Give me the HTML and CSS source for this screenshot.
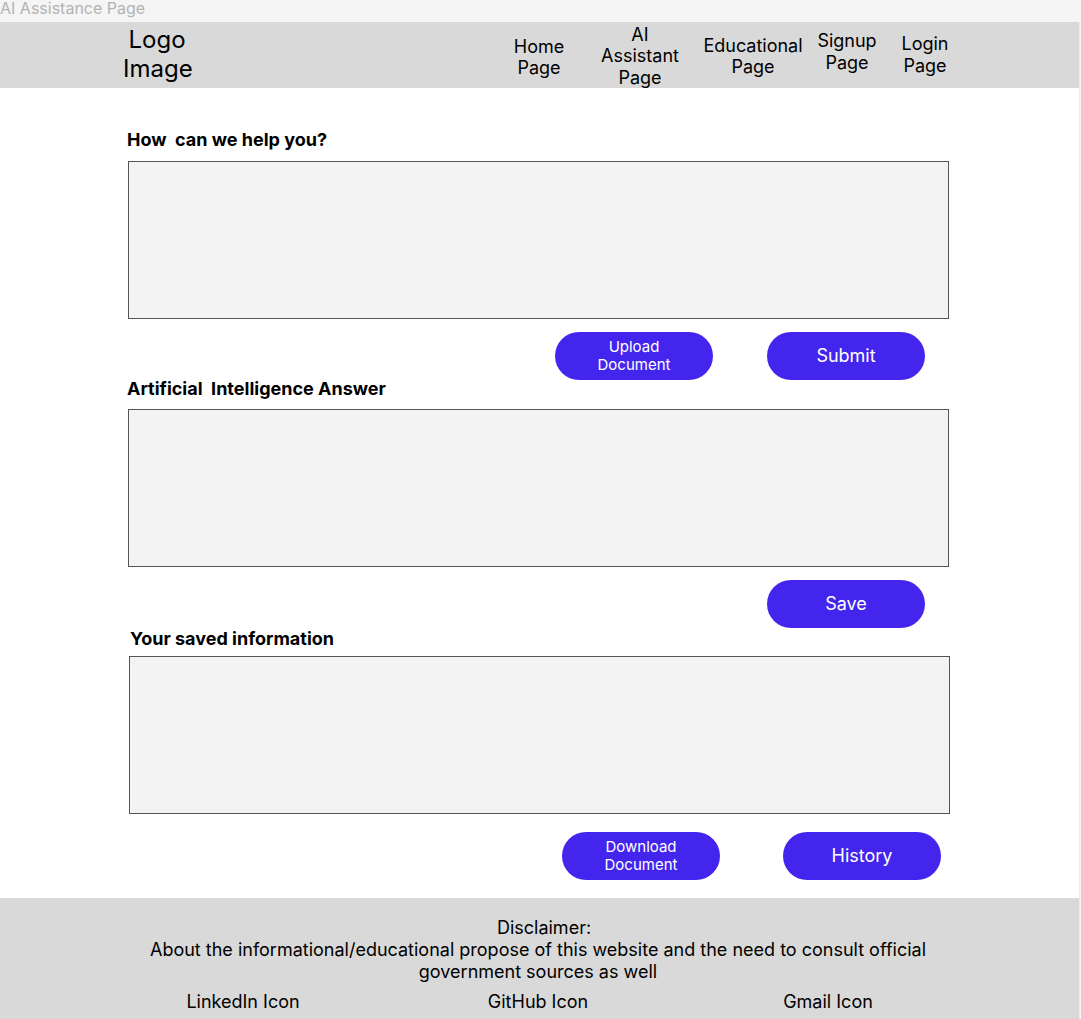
FILE: index.html
```html
<!DOCTYPE html>
<html lang="en">
<head>
<meta charset="utf-8">
<title>AI Assistance Page</title>
<link rel="stylesheet" href="styles.css">
</head>
<body>
<div class="frame-label">AI Assistance Page</div>
<div class="frame">
  <header class="header">
    <div class="logo">Logo<br>Image</div>
    <nav class="nav">
      <a class="nav-item nav-home">Home<br>Page</a>
      <a class="nav-item nav-ai">AI<br>Assistant<br>Page</a>
      <a class="nav-item nav-edu">Educational<br>Page</a>
      <a class="nav-item nav-signup">Signup<br>Page</a>
      <a class="nav-item nav-login">Login<br>Page</a>
    </nav>
  </header>

  <main class="main">
    <section class="block block-help">
      <h2 class="block-title">How&nbsp; can we help you?</h2>
      <div class="box"></div>
      <div class="actions actions-help">
        <button class="btn btn-small btn-upload">Upload<br>Document</button>
        <button class="btn btn-submit">Submit</button>
      </div>
    </section>

    <section class="block block-answer">
      <h2 class="block-title title-answer">Artificial&nbsp; Intelligence Answer</h2>
      <div class="box"></div>
      <div class="actions actions-answer">
        <button class="btn btn-save">Save</button>
      </div>
    </section>

    <section class="block block-saved">
      <h2 class="block-title title-saved">Your saved information</h2>
      <div class="box box-saved"></div>
      <div class="actions actions-saved">
        <button class="btn btn-small btn-download">Download<br>Document</button>
        <button class="btn btn-history">History</button>
      </div>
    </section>
  </main>

  <footer class="footer">
    <p class="disclaimer"><span class="disclaimer-head">Disclaimer:</span><br>About the informational/educational propose of this website and the need to consult official<br>government sources as well</p>
    <div class="socials">
      <span class="social social-linkedin">LinkedIn Icon</span>
      <span class="social social-github">GitHub Icon</span>
      <span class="social social-gmail">Gmail Icon</span>
    </div>
  </footer>
</div>
</body>
</html>
```
FILE: styles.css
```css
* { box-sizing: border-box; }
html, body { margin: 0; padding: 0; }
body {
  background: #f5f5f5;
  font-family: Inter, "Noto Sans", sans-serif;
  color: #000;
  width: 1081px;
  height: 1019px;
  overflow: hidden;
}
.frame-label {
  height: 22px;
  font-size: 16px;
  line-height: 16px;
  color: #b3b3b3;
}
.frame {
  width: 1080px;
  background: #fff;
  border-right: 1px solid #ececec;
}
.header {
  height: 66px;
  background: #d9d9d9;
  display: flex;
  align-items: center;
}
.logo {
  width: 68px;
  margin-left: 123px;
  text-align: center;
  font-size: 24px;
  line-height: 29px;
  padding-bottom: 2px;
}
.nav {
  display: flex;
  align-items: center;
  margin-left: 298px;
  height: 100%;
}
.nav-item {
  text-align: center;
  font-size: 18px;
  line-height: 21.5px;
  color: #000;
}
.nav-home { width: 100px; padding-top: 4px; }
.nav-ai { width: 102px; padding-top: 2px; }
.nav-edu { width: 124px; padding-top: 2px; }
.nav-signup { width: 64px; padding-bottom: 7px; }
.nav-login { width: 92px; padding-bottom: 1px; }

.main {
  height: 810px;
  padding-top: 41px;
}
.block { margin-left: 128px; width: 822px; }
.block-title {
  margin: 0 0 11px -1px;
  font-size: 18px;
  line-height: 21px;
  font-weight: 700;
}
.title-answer { margin-bottom: 10px; }
.title-saved { margin-left: 2px; margin-bottom: 7px; }
.box {
  width: 821px;
  height: 158px;
  background: #f3f3f3;
  border: 1px solid #555;
}
.box-saved { margin-left: 1px; }
.actions {
  display: flex;
  margin-top: 13px;
  height: 48px;
}
.actions-help { padding-left: 427px; gap: 54px; }
.actions-answer { padding-left: 639px; }
.actions-saved { padding-left: 434px; gap: 63px; margin-top: 18px; }
.block-answer { margin-top: -2px; }
.block-saved { margin-top: 0; }

.btn {
  width: 158px;
  height: 48px;
  border: none;
  border-radius: 24px;
  background: #4325ee;
  color: #fff;
  font-family: Inter, "Noto Sans", sans-serif;
  font-size: 18px;
  line-height: 20px;
  padding: 0;
}
.btn-small {
  font-size: 15px;
  line-height: 18px;
}

.footer {
  height: 121px;
  background: #d9d9d9;
  padding-top: 19px;
  text-align: center;
}
.disclaimer {
  margin: 0 0 0 -3px;
  font-size: 18px;
  line-height: 22px;
}
.disclaimer-head {
  display: inline-block;
  margin-left: 12px;
}
.socials {
  display: flex;
  margin-top: 8px;
  font-size: 18px;
  line-height: 22px;
}
.social { display: block; text-align: center; }
.social-linkedin { width: 200px; margin-left: 143px; }
.social-github { width: 200px; margin-left: 95px; }
.social-gmail { width: 200px; margin-left: 90px; }
```
